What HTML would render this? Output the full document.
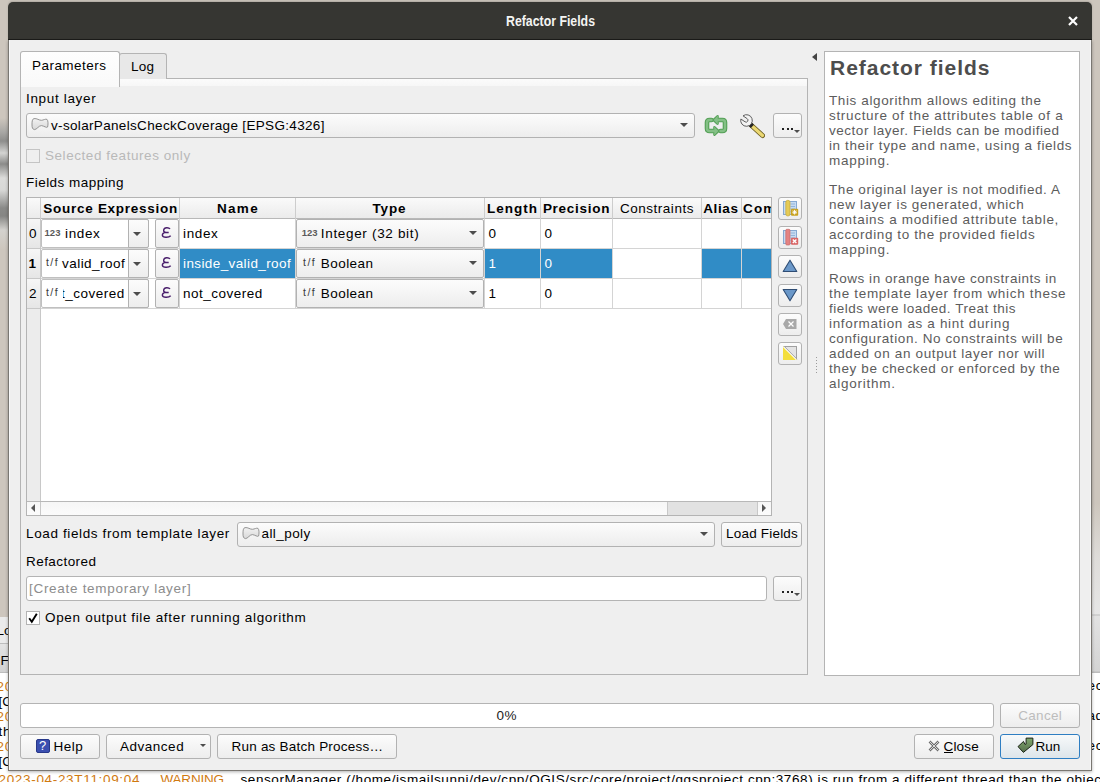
<!DOCTYPE html>
<html><head><meta charset="utf-8">
<style>
*{box-sizing:border-box;margin:0;padding:0}
html,body{width:1100px;height:782px;overflow:hidden;background:#cdc6bd}
body{position:relative;font-family:"Liberation Sans",sans-serif;font-size:14px;color:#000}
.a{position:absolute}
.t{position:absolute;white-space:nowrap}
.btn{position:absolute;border:1px solid #b2b2b2;border-radius:3px;background:linear-gradient(#fcfcfc,#ededed)}
.frame{position:absolute;border:1px solid #b4b4b4}
.arr{position:absolute;width:0;height:0;border-left:4px solid transparent;border-right:4px solid transparent;border-top:4px solid #4d4d4d}
</style></head>
<body>
<div class="a" style="left:0;top:0;width:9px;height:617px;background:linear-gradient(#cdc6bd 0,#cdc6bd 118px,#a9a8a5 132px,#8e8e8c 141px,#d4d4d2 153px,#8c8c8a 164px,#dcdcda 178px,#d8d8d6 190px,#8a8a88 208px,#868684 216px,#d4d2ce 230px,#cdc6bd 250px,#cdc6bd 616px)"></div>
<div class="a" style="left:0;top:617px;width:9px;height:26px;background:#ebebeb"></div>
<div class="a" style="left:0;top:643px;width:9px;height:1px;background:#bdbdbd"></div>
<div class="a" style="left:0;top:644px;width:9px;height:28px;background:linear-gradient(#e4e4e4,#d2d2d2)"></div>
<div class="a" style="left:0;top:672px;width:9px;height:1px;background:#bdbdbd"></div>
<div class="a" style="left:0;top:673px;width:1100px;height:109px;background:#fff"></div>
<div class="a" style="left:1091px;top:0;width:9px;height:673px;background:linear-gradient(#cdc6bd 0,#cdc6bd 503px,#dedcd9 557px,#e6e6e6 614px,#bdbdbd 615px,#e2e2e2 616px,#d4d4d4 671px,#bdbdbd 672px)"></div>
<div class="t" style="left:-3.50px;top:621px;font-size:13.5px;line-height:20px;letter-spacing:-0.031px;">Lo</div>
<div class="t" style="left:0.50px;top:651px;font-size:13.5px;line-height:20px;letter-spacing:-0.766px;">F</div>
<div class="t" style="left:-3.50px;top:677px;font-size:13.5px;line-height:20px;letter-spacing:0.750px;color:#d07a10;">2023</div>
<div class="t" style="left:-1.50px;top:692px;font-size:13.5px;line-height:20px;letter-spacing:-0.059px;">[CRIT</div>
<div class="t" style="left:-3.50px;top:707px;font-size:13.5px;line-height:20px;letter-spacing:0.750px;color:#d07a10;">2023</div>
<div class="t" style="left:-1.50px;top:722px;font-size:13.5px;line-height:20px;letter-spacing:0.849px;">the</div>
<div class="t" style="left:-3.50px;top:737px;font-size:13.5px;line-height:20px;letter-spacing:0.750px;color:#d07a10;">2023</div>
<div class="t" style="left:-1.50px;top:752px;font-size:13.5px;line-height:20px;letter-spacing:-0.059px;">[CRIT</div>
<div class="t" style="left:1087.50px;top:676px;font-size:13.5px;line-height:20px;letter-spacing:0.740px;">ect</div>
<div class="t" style="left:1087.50px;top:706px;font-size:13.5px;line-height:20px;letter-spacing:0.594px;">ad</div>
<div class="t" style="left:1087.50px;top:736px;font-size:13.5px;line-height:20px;letter-spacing:0.740px;">ect</div>
<div class="t" style="left:-1.50px;top:770px;font-size:13.5px;line-height:20px;letter-spacing:0.674px;color:#d07a10;">2023-04-23T11:09:04</div>
<div class="t" style="left:160.50px;top:770px;font-size:13.5px;line-height:20px;letter-spacing:-0.188px;color:#d07a10;">WARNING</div>
<div class="t" style="left:240.50px;top:770px;font-size:13.5px;line-height:20px;letter-spacing:0.581px;">sensorManager (/home/ismailsunni/dev/cpp/QGIS/src/core/project/qgsproject.cpp:3768) is run from a different thread than the object</div>
<div class="a" style="left:8px;top:2px;width:1084px;height:38px;background:#363632;border-radius:5px 5px 0 0;border-bottom:1px solid #1c1c1a;box-shadow:0 -1px 2px rgba(0,0,0,0.15)"></div>
<div class="a" style="left:8px;top:40px;width:1084px;height:731px;background:#efefef;box-shadow:0 1px 3px rgba(0,0,0,0.3);border:1px solid #7a7772;border-top:none"></div><div class="a" style="left:9px;top:40px;width:1px;height:730px;background:#f9f9f9"></div><div class="a" style="left:1090px;top:40px;width:1px;height:730px;background:#f7f7f7"></div>
<div class="t" style="left:506.00px;top:11px;font-size:14.5px;line-height:20px;letter-spacing:0.000px;font-weight:bold;transform:scaleX(0.8496);transform-origin:0 0;color:#f4f4f2;">Refactor Fields</div>
<svg class="a" style="left:1067px;top:15px" width="12" height="12" viewBox="0 0 12 12"><path d="M2 2L10 10M10 2L2 10" stroke="#fff" stroke-width="2.2"/></svg>
<div class="frame" style="left:20px;top:78px;width:788px;height:597px;background:#efefef"></div>
<div class="a" style="left:21px;top:79px;width:786px;height:7px;background:linear-gradient(#fbfbfb,#f7f7f7)"></div>
<div class="a" style="left:119px;top:53px;width:48px;height:26px;background:#e8e8e8;border:1px solid #b4b4b4;border-bottom:none;border-radius:3px 3px 0 0"></div>
<div class="a" style="left:20px;top:51px;width:100px;height:36px;background:linear-gradient(#fefefe,#f9f9f9);border:1px solid #b4b4b4;border-bottom:none;border-radius:3px 3px 0 0"></div>
<div class="t" style="left:32.00px;top:56px;font-size:13.5px;line-height:20px;letter-spacing:0.459px;">Parameters</div>
<div class="t" style="left:131.00px;top:57px;font-size:13.5px;line-height:20px;letter-spacing:0.224px;">Log</div>
<div class="t" style="left:26.00px;top:89px;font-size:13.5px;line-height:20px;letter-spacing:0.663px;">Input layer</div>
<div class="btn" style="left:26px;top:113px;width:669px;height:25px"></div>
<svg class="a" style="left:31px;top:117px" width="18" height="14" viewBox="0 0 18 14"><defs><linearGradient id="pg" x1="0" y1="0" x2="0" y2="1"><stop offset="0" stop-color="#f2f2f2"/><stop offset="1" stop-color="#d8d8d8"/></linearGradient></defs><path d="M3 1.6C6 1.2 8 3.4 10.5 3.3C12.5 3.2 14.5 1.6 16 2.4C17.3 3.4 17.2 8 16.6 10C15.8 11.2 13 9 10.5 8.6C8 8.3 5.5 12.8 3.5 12.6C1.5 12.4 1 10.5 1 8C1 5 1 2 3 1.6Z" fill="url(#pg)" stroke="#8a8a8a" stroke-width="0.9"/></svg>
<div class="t" style="left:51.00px;top:116px;font-size:13.5px;line-height:20px;letter-spacing:0.333px;">v-solarPanelsCheckCoverage [EPSG:4326]</div>
<div class="arr" style="left:680px;top:123px"></div>
<svg class="a" style="left:704px;top:115px" width="24" height="21" viewBox="0 0 24 21"><g fill="none" stroke-linejoin="round" stroke-linecap="round"><path d="M7.5 5H5.5Q3 5 3 7.5V13.5Q3 16 5.5 16H11" stroke="#55a057" stroke-width="4.6"/><path d="M16.5 16H18.5Q21 16 21 13.5V7.5Q21 5 18.5 5H13" stroke="#55a057" stroke-width="4.6"/><path d="M10.5 12.3L14.2 16L10.5 19.7Z" fill="#55a057" stroke="#55a057" stroke-width="2.6"/><path d="M13.5 1.3L9.8 5L13.5 8.7Z" fill="#55a057" stroke="#55a057" stroke-width="2.6"/><path d="M7.5 5H5.5Q3 5 3 7.5V13.5Q3 16 5.5 16H11" stroke="#84c086" stroke-width="2.4"/><path d="M16.5 16H18.5Q21 16 21 13.5V7.5Q21 5 18.5 5H13" stroke="#84c086" stroke-width="2.4"/><path d="M10.5 12.3L14.2 16L10.5 19.7Z" fill="#84c086" stroke="#84c086" stroke-width="0.6"/><path d="M13.5 1.3L9.8 5L13.5 8.7Z" fill="#84c086" stroke="#84c086" stroke-width="0.6"/></g></svg>
<svg class="a" style="left:739px;top:113px" width="26" height="26" viewBox="0 0 26 26"><path d="M12.5 12.5L23.5 22.5" stroke="#6b5d22" stroke-width="5" stroke-linecap="round"/><path d="M12.5 12.5L23.5 22.5" stroke="#ebd873" stroke-width="3.2" stroke-linecap="round"/><path d="M10.6 10.6L13.4 13.4" stroke="#262626" stroke-width="4.4"/><path d="M4.02 2.85A5.8 5.8 0 1 1 1.89 6.01L6.02 8.8A1.9 1.9 0 0 0 8.14 5.64Z" fill="#f3f3f3" stroke="#5e5e5e" stroke-width="1" stroke-linejoin="round"/></svg>
<div class="btn" style="left:773px;top:113px;width:29px;height:25px"></div>
<div class="a" style="left:782px;top:128px;width:2px;height:2px;background:#222"></div>
<div class="a" style="left:786.5px;top:128px;width:2px;height:2px;background:#222"></div>
<div class="a" style="left:791px;top:128px;width:2px;height:2px;background:#222"></div>
<div class="arr" style="left:794px;top:130px;border-left-width:3px;border-right-width:3px;border-top-width:3px"></div>
<div class="a" style="left:26px;top:149px;width:14px;height:14px;border:1px solid #c4c4c4;background:#efefef"></div>
<div class="t" style="left:45.00px;top:146px;font-size:13.5px;line-height:20px;letter-spacing:0.551px;color:#b9b9b9;">Selected features only</div>
<div class="t" style="left:26.00px;top:173px;font-size:13.5px;line-height:20px;letter-spacing:0.464px;">Fields mapping</div>
<div class="a" style="left:26px;top:197px;width:746px;height:319px;border:1px solid #b4b4b4;background:#fff;overflow:hidden">
 <div class="a" style="left:0;top:0;width:745px;height:21px;background:linear-gradient(#fafafa,#ebebeb);border-bottom:1px solid #b8b8b8"></div>
 <div class="a" style="left:13px;top:0;width:1px;height:21px;background:#cdcdcd"></div>
 <div class="a" style="left:152px;top:0;width:1px;height:21px;background:#cdcdcd"></div>
 <div class="a" style="left:268px;top:0;width:1px;height:21px;background:#cdcdcd"></div>
 <div class="a" style="left:457px;top:0;width:1px;height:21px;background:#cdcdcd"></div>
 <div class="a" style="left:513px;top:0;width:1px;height:21px;background:#cdcdcd"></div>
 <div class="a" style="left:585px;top:0;width:1px;height:21px;background:#cdcdcd"></div>
 <div class="a" style="left:674px;top:0;width:1px;height:21px;background:#cdcdcd"></div>
 <div class="a" style="left:714px;top:0;width:1px;height:21px;background:#cdcdcd"></div>
 <div class="a" style="left:0;top:21px;width:14px;height:282px;background:#ececec;border-right:1px solid #c8c8c8"></div>
 <div class="a" style="left:0;top:21px;width:14px;height:30px;background:linear-gradient(#f6f6f6,#e6e6e6);border-right:1px solid #c8c8c8;border-bottom:1px solid #c8c8c8"></div>
 <div class="a" style="left:0;top:51px;width:14px;height:30px;background:linear-gradient(#f6f6f6,#e6e6e6);border-right:1px solid #c8c8c8;border-bottom:1px solid #c8c8c8"></div>
 <div class="a" style="left:0;top:81px;width:14px;height:30px;background:linear-gradient(#f6f6f6,#e6e6e6);border-right:1px solid #c8c8c8;border-bottom:1px solid #c8c8c8"></div>
 <div class="a" style="left:14px;top:50px;width:731px;height:1px;background:#d4d4d4"></div>
 <div class="a" style="left:14px;top:80px;width:731px;height:1px;background:#d4d4d4"></div>
 <div class="a" style="left:14px;top:110px;width:731px;height:1px;background:#d4d4d4"></div>
 <div class="a" style="left:152px;top:21px;width:1px;height:90px;background:#d4d4d4"></div>
 <div class="a" style="left:268px;top:21px;width:1px;height:90px;background:#d4d4d4"></div>
 <div class="a" style="left:457px;top:21px;width:1px;height:90px;background:#d4d4d4"></div>
 <div class="a" style="left:513px;top:21px;width:1px;height:90px;background:#d4d4d4"></div>
 <div class="a" style="left:585px;top:21px;width:1px;height:90px;background:#d4d4d4"></div>
 <div class="a" style="left:674px;top:21px;width:1px;height:90px;background:#d4d4d4"></div>
 <div class="a" style="left:714px;top:21px;width:1px;height:90px;background:#d4d4d4"></div>
 <div class="a" style="left:153px;top:51px;width:115px;height:29px;background:#308cc6"></div>
 <div class="a" style="left:458px;top:51px;width:55px;height:29px;background:#308cc6"></div>
 <div class="a" style="left:514px;top:51px;width:71px;height:29px;background:#308cc6"></div>
 <div class="a" style="left:675px;top:51px;width:39px;height:29px;background:#308cc6"></div>
 <div class="a" style="left:715px;top:51px;width:30px;height:29px;background:#308cc6"></div>
</div>
<div class="t" style="left:43.20px;top:199px;font-size:13.5px;line-height:20px;letter-spacing:0.739px;font-weight:bold;">Source Expression</div>
<div class="t" style="left:217.00px;top:199px;font-size:13.5px;line-height:20px;letter-spacing:1.305px;font-weight:bold;">Name</div>
<div class="t" style="left:372.50px;top:199px;font-size:13.5px;line-height:20px;letter-spacing:0.848px;font-weight:bold;">Type</div>
<div class="t" style="left:487.00px;top:199px;font-size:13.5px;line-height:20px;letter-spacing:1.018px;font-weight:bold;">Length</div>
<div class="t" style="left:542.90px;top:199px;font-size:13.5px;line-height:20px;letter-spacing:0.720px;font-weight:bold;">Precision</div>
<div class="t" style="left:619.90px;top:199px;font-size:13.5px;line-height:20px;letter-spacing:0.530px;">Constraints</div>
<div class="t" style="left:703.20px;top:199px;font-size:13.5px;line-height:20px;letter-spacing:0.637px;font-weight:bold;">Alias</div>
<div class="a" style="left:742px;top:198px;width:29px;height:20px;overflow:hidden"><div class="t" style="left:1.10px;top:1px;font-size:13.5px;line-height:20px;letter-spacing:1.085px;font-weight:bold;">Comment</div>
</div>
<div class="t" style="left:29.00px;top:224px;font-size:13.5px;line-height:20px;letter-spacing:0.750px;">0</div>
<div class="t" style="left:28.50px;top:254px;font-size:13.5px;line-height:20px;letter-spacing:1.531px;font-weight:bold;">1</div>
<div class="t" style="left:29.00px;top:284px;font-size:13.5px;line-height:20px;letter-spacing:0.750px;">2</div>
<div class="a" style="left:41px;top:219px;width:108px;height:29px;background:#fff;border:1px solid #c0c0c0;border-radius:2px"></div>
<div class="btn" style="left:128px;top:219px;width:21px;height:29px;border-radius:0 2px 2px 0"></div>
<div class="arr" style="left:133px;top:232px"></div>
<div class="btn" style="left:155px;top:219px;width:24px;height:29px;border-radius:2px"></div>
<svg class="a" style="left:161px;top:226px" width="11" height="13" viewBox="0 0 11 13"><path d="M9 3C8 1.3 3.2 0.8 2.7 4C2.4 5.8 3.8 6.4 5 6.4H7.7M5 6.4C2.5 6.6 1.2 7.8 1.4 9.3C1.7 11.6 7.5 12 9.7 9.7" fill="none" stroke="#4a1f6c" stroke-width="1.45"/></svg>
<div class="t" style="left:44.50px;top:223px;font-size:9.5px;line-height:20px;letter-spacing:0.052px;font-weight:bold;color:#5a5a5a;">123</div>
<div class="t" style="left:65.00px;top:224px;font-size:13.5px;line-height:20px;letter-spacing:0.650px;">index</div>
<div class="t" style="left:183.00px;top:224px;font-size:13.5px;line-height:20px;letter-spacing:0.650px;">index</div>
<div class="btn" style="left:296px;top:219px;width:188px;height:29px;border-radius:2px"></div>
<div class="t" style="left:301.70px;top:223px;font-size:9.5px;line-height:20px;letter-spacing:0.052px;font-weight:bold;color:#5a5a5a;">123</div>
<div class="t" style="left:320.80px;top:224px;font-size:13.5px;line-height:20px;letter-spacing:0.674px;">Integer (32 bit)</div>
<div class="arr" style="left:469px;top:231px"></div>
<div class="t" style="left:488.50px;top:224px;font-size:13.5px;line-height:20px;letter-spacing:0.750px;">0</div>
<div class="t" style="left:544.50px;top:224px;font-size:13.5px;line-height:20px;letter-spacing:0.750px;">0</div>
<div class="a" style="left:41px;top:249px;width:108px;height:29px;background:#fff;border:1px solid #c0c0c0;border-radius:2px"></div>
<div class="btn" style="left:128px;top:249px;width:21px;height:29px;border-radius:0 2px 2px 0"></div>
<div class="arr" style="left:133px;top:262px"></div>
<div class="btn" style="left:155px;top:249px;width:24px;height:29px;border-radius:2px"></div>
<svg class="a" style="left:161px;top:256px" width="11" height="13" viewBox="0 0 11 13"><path d="M9 3C8 1.3 3.2 0.8 2.7 4C2.4 5.8 3.8 6.4 5 6.4H7.7M5 6.4C2.5 6.6 1.2 7.8 1.4 9.3C1.7 11.6 7.5 12 9.7 9.7" fill="none" stroke="#4a1f6c" stroke-width="1.45"/></svg>
<div class="t" style="left:46.00px;top:252px;font-size:10.5px;line-height:20px;letter-spacing:1.411px;color:#3a3a3a;">t/f</div>
<div class="t" style="left:62.00px;top:254px;font-size:13.5px;line-height:20px;letter-spacing:0.459px;">valid_roof</div>
<div class="t" style="left:183.00px;top:254px;font-size:13.5px;line-height:20px;letter-spacing:0.397px;color:#fff;">inside_valid_roof</div>
<div class="btn" style="left:296px;top:249px;width:188px;height:29px;border-radius:2px"></div>
<div class="t" style="left:303.10px;top:252px;font-size:10.5px;line-height:20px;letter-spacing:1.411px;color:#3a3a3a;">t/f</div>
<div class="t" style="left:320.80px;top:254px;font-size:13.5px;line-height:20px;letter-spacing:0.438px;">Boolean</div>
<div class="arr" style="left:469px;top:261px"></div>
<div class="t" style="left:488.50px;top:254px;font-size:13.5px;line-height:20px;letter-spacing:0.750px;color:#fff;">1</div>
<div class="t" style="left:544.50px;top:254px;font-size:13.5px;line-height:20px;letter-spacing:0.750px;color:#fff;">0</div>
<div class="a" style="left:41px;top:279px;width:108px;height:29px;background:#fff;border:1px solid #c0c0c0;border-radius:2px"></div>
<div class="btn" style="left:128px;top:279px;width:21px;height:29px;border-radius:0 2px 2px 0"></div>
<div class="arr" style="left:133px;top:292px"></div>
<div class="btn" style="left:155px;top:279px;width:24px;height:29px;border-radius:2px"></div>
<svg class="a" style="left:161px;top:286px" width="11" height="13" viewBox="0 0 11 13"><path d="M9 3C8 1.3 3.2 0.8 2.7 4C2.4 5.8 3.8 6.4 5 6.4H7.7M5 6.4C2.5 6.6 1.2 7.8 1.4 9.3C1.7 11.6 7.5 12 9.7 9.7" fill="none" stroke="#4a1f6c" stroke-width="1.45"/></svg>
<div class="t" style="left:46.00px;top:282px;font-size:10.5px;line-height:20px;letter-spacing:1.411px;color:#3a3a3a;">t/f</div>
<div class="a" style="left:63px;top:280px;width:64px;height:27px;overflow:hidden"><div class="t" style="left:-18.00px;top:4px;font-size:13.5px;line-height:20px;letter-spacing:0.501px;">not_covered</div>
</div>
<div class="t" style="left:183.00px;top:284px;font-size:13.5px;line-height:20px;letter-spacing:0.501px;">not_covered</div>
<div class="btn" style="left:296px;top:279px;width:188px;height:29px;border-radius:2px"></div>
<div class="t" style="left:303.10px;top:282px;font-size:10.5px;line-height:20px;letter-spacing:1.411px;color:#3a3a3a;">t/f</div>
<div class="t" style="left:320.80px;top:284px;font-size:13.5px;line-height:20px;letter-spacing:0.438px;">Boolean</div>
<div class="arr" style="left:469px;top:291px"></div>
<div class="t" style="left:488.50px;top:284px;font-size:13.5px;line-height:20px;letter-spacing:0.750px;">1</div>
<div class="t" style="left:544.50px;top:284px;font-size:13.5px;line-height:20px;letter-spacing:0.750px;">0</div>
<div class="a" style="left:27px;top:501px;width:744px;height:14px;background:linear-gradient(#f6f6f6,#fbfbfb);border-top:1px solid #b8b8b8"></div>
<div class="a" style="left:40px;top:502px;width:1px;height:13px;background:#c8c8c8"></div>
<div class="a" style="left:31px;top:504px;width:0;height:0;border-top:4px solid transparent;border-bottom:4px solid transparent;border-right:4px solid #555"></div>
<div class="a" style="left:667px;top:502px;width:91px;height:13px;background:#e2e2e2;border-left:1px solid #c8c8c8;border-right:1px solid #c8c8c8"></div>
<div class="a" style="left:762px;top:504px;width:0;height:0;border-top:4px solid transparent;border-bottom:4px solid transparent;border-left:4px solid #555"></div>
<div class="btn" style="left:778px;top:197px;width:24px;height:23px"></div>
<svg class="a" style="left:781px;top:199px" width="18" height="19" viewBox="0 0 18 19"><rect x="2.5" y="2.5" width="13" height="13" fill="#c6dbf2" stroke="#86a9d2"/><path d="M9.5 5H14M9.5 7.5H14M9.5 10H14M9.5 12.5H14" stroke="#86a9d2" stroke-width="0.8"/><rect x="4.8" y="1.3" width="4.2" height="15.7" rx="2" fill="#e5cb56" stroke="#c4a83a" stroke-width="0.7"/><rect x="10" y="9.7" width="7.2" height="7" rx="1" fill="#c9a21e"/><path d="M13.6 10.9V15.5M11.3 13.2H15.9M12 11.6L15.2 14.8M15.2 11.6L12 14.8" stroke="#fff" stroke-width="1"/></svg>
<div class="btn" style="left:778px;top:226px;width:24px;height:23px"></div>
<svg class="a" style="left:781px;top:228px" width="18" height="19" viewBox="0 0 18 19"><rect x="2.5" y="2.5" width="13" height="13" fill="#c6dbf2" stroke="#86a9d2"/><path d="M9.5 5H14M9.5 7.5H14M9.5 10H14M9.5 12.5H14" stroke="#86a9d2" stroke-width="0.8"/><rect x="4.8" y="1.3" width="4.2" height="15.7" rx="1" fill="#e38383" stroke="#c86a6a" stroke-width="0.7"/><rect x="10" y="9.7" width="7.2" height="7" rx="1" fill="#d96666"/><path d="M11.8 11.5L15.4 15M15.4 11.5L11.8 15" stroke="#fff" stroke-width="1.4"/></svg>
<div class="btn" style="left:778px;top:255px;width:24px;height:23px"></div>
<svg class="a" style="left:782px;top:259px" width="16" height="14" viewBox="0 0 16 14"><path d="M8 1.2L14.8 12.5H1.2Z" fill="#6b98c9" stroke="#2f4d74" stroke-width="1.1" stroke-linejoin="round"/></svg>
<div class="btn" style="left:778px;top:284px;width:24px;height:23px"></div>
<svg class="a" style="left:782px;top:288px" width="16" height="14" viewBox="0 0 16 14"><path d="M1.2 1.5H14.8L8 12.8Z" fill="#6b98c9" stroke="#2f4d74" stroke-width="1.1" stroke-linejoin="round"/></svg>
<div class="btn" style="left:778px;top:313px;width:24px;height:23px"></div>
<svg class="a" style="left:782px;top:318px" width="16" height="12" viewBox="0 0 16 12"><path d="M4 1H14.5V11H4L1 6Z" fill="#a9a9a9"/><path d="M6.5 3.5L11.5 8.5M11.5 3.5L6.5 8.5" stroke="#fff" stroke-width="1.2"/></svg>
<div class="btn" style="left:778px;top:342px;width:24px;height:23px"></div>
<svg class="a" style="left:782px;top:345px" width="16" height="16" viewBox="0 0 16 16"><rect x="1.5" y="1.5" width="13" height="13" fill="#e4e4e4" stroke="#a0a0a0"/><path d="M1 1L15 15H1Z" fill="#f3de3c"/><path d="M1.5 1.5L14.5 14.5" stroke="#fff" stroke-width="1.6"/><path d="M2 1.2L15 14.2" stroke="#777" stroke-width="0.7"/></svg>
<div class="t" style="left:26.00px;top:524px;font-size:13.5px;line-height:20px;letter-spacing:0.623px;">Load fields from template layer</div>
<div class="btn" style="left:237px;top:522px;width:478px;height:25px"></div>
<svg class="a" style="left:242px;top:526px" width="18" height="14" viewBox="0 0 18 14"><defs><linearGradient id="pg" x1="0" y1="0" x2="0" y2="1"><stop offset="0" stop-color="#f2f2f2"/><stop offset="1" stop-color="#d8d8d8"/></linearGradient></defs><path d="M3 1.6C6 1.2 8 3.4 10.5 3.3C12.5 3.2 14.5 1.6 16 2.4C17.3 3.4 17.2 8 16.6 10C15.8 11.2 13 9 10.5 8.6C8 8.3 5.5 12.8 3.5 12.6C1.5 12.4 1 10.5 1 8C1 5 1 2 3 1.6Z" fill="url(#pg)" stroke="#8a8a8a" stroke-width="0.9"/></svg>
<div class="t" style="left:261.50px;top:524px;font-size:13.5px;line-height:20px;letter-spacing:0.422px;">all_poly</div>
<div class="arr" style="left:700px;top:532px"></div>
<div class="btn" style="left:721px;top:522px;width:81px;height:25px"></div>
<div class="t" style="left:726.00px;top:524px;font-size:13.5px;line-height:20px;letter-spacing:0.203px;">Load Fields</div>
<div class="t" style="left:26.00px;top:552px;font-size:13.5px;line-height:20px;letter-spacing:0.442px;">Refactored</div>
<div class="a" style="left:26px;top:576px;width:741px;height:25px;background:#fff;border:1px solid #b4b4b4;border-radius:3px"></div>
<div class="t" style="left:29.00px;top:579px;font-size:13.5px;line-height:20px;letter-spacing:0.703px;color:#8d8d8d;">[Create temporary layer]</div>
<div class="btn" style="left:773px;top:576px;width:29px;height:25px"></div>
<div class="a" style="left:782px;top:591px;width:2px;height:2px;background:#222"></div>
<div class="a" style="left:786.5px;top:591px;width:2px;height:2px;background:#222"></div>
<div class="a" style="left:791px;top:591px;width:2px;height:2px;background:#222"></div>
<div class="arr" style="left:794px;top:593px;border-left-width:3px;border-right-width:3px;border-top-width:3px"></div>
<div class="a" style="left:26px;top:611px;width:14px;height:14px;border:1px solid #b4b4b4;background:#fff"></div>
<svg class="a" style="left:27px;top:612px" width="12" height="12" viewBox="0 0 12 12"><path d="M2.2 6.2L4.8 9.8L9.8 1.8" fill="none" stroke="#000" stroke-width="1.9"/></svg>
<div class="t" style="left:45.00px;top:608px;font-size:13.5px;line-height:20px;letter-spacing:0.683px;">Open output file after running algorithm</div>
<div class="a" style="left:812px;top:53px;width:0;height:0;border-top:4px solid transparent;border-bottom:4px solid transparent;border-right:5px solid #444"></div>
<div class="a" style="left:816px;top:357px;width:1px;height:17px;background:repeating-linear-gradient(#9a9a9a 0 1px,transparent 1px 3px)"></div>
<div class="a" style="left:824px;top:51px;width:256px;height:625px;background:#fff;border:1px solid #b4b4b4"></div>
<div class="t" style="left:830.00px;top:53px;font-size:21px;line-height:30px;letter-spacing:0.975px;font-weight:bold;color:#4d4d4d;">Refactor fields</div>
<div class="t" style="left:829.00px;top:91px;font-size:13.5px;line-height:20px;letter-spacing:0.620px;color:#5c5c5c;">This algorithm allows editing the</div>
<div class="t" style="left:829.00px;top:106px;font-size:13.5px;line-height:20px;letter-spacing:0.677px;color:#5c5c5c;">structure of the attributes table of a</div>
<div class="t" style="left:829.00px;top:121px;font-size:13.5px;line-height:20px;letter-spacing:0.526px;color:#5c5c5c;">vector layer. Fields can be modified</div>
<div class="t" style="left:829.00px;top:136px;font-size:13.5px;line-height:20px;letter-spacing:0.614px;color:#5c5c5c;">in their type and name, using a fields</div>
<div class="t" style="left:829.00px;top:151px;font-size:13.5px;line-height:20px;letter-spacing:0.721px;color:#5c5c5c;">mapping.</div>
<div class="t" style="left:829.00px;top:180px;font-size:13.5px;line-height:20px;letter-spacing:0.580px;color:#5c5c5c;">The original layer is not modified. A</div>
<div class="t" style="left:829.00px;top:195px;font-size:13.5px;line-height:20px;letter-spacing:0.603px;color:#5c5c5c;">new layer is generated, which</div>
<div class="t" style="left:829.00px;top:210px;font-size:13.5px;line-height:20px;letter-spacing:0.677px;color:#5c5c5c;">contains a modified attribute table,</div>
<div class="t" style="left:829.00px;top:225px;font-size:13.5px;line-height:20px;letter-spacing:0.607px;color:#5c5c5c;">according to the provided fields</div>
<div class="t" style="left:829.00px;top:240px;font-size:13.5px;line-height:20px;letter-spacing:0.721px;color:#5c5c5c;">mapping.</div>
<div class="t" style="left:829.00px;top:269px;font-size:13.5px;line-height:20px;letter-spacing:0.521px;color:#5c5c5c;">Rows in orange have constraints in</div>
<div class="t" style="left:829.00px;top:284px;font-size:13.5px;line-height:20px;letter-spacing:0.692px;color:#5c5c5c;">the template layer from which these</div>
<div class="t" style="left:829.00px;top:299px;font-size:13.5px;line-height:20px;letter-spacing:0.503px;color:#5c5c5c;">fields were loaded. Treat this</div>
<div class="t" style="left:829.00px;top:314px;font-size:13.5px;line-height:20px;letter-spacing:0.655px;color:#5c5c5c;">information as a hint during</div>
<div class="t" style="left:829.00px;top:329px;font-size:13.5px;line-height:20px;letter-spacing:0.593px;color:#5c5c5c;">configuration. No constraints will be</div>
<div class="t" style="left:829.00px;top:344px;font-size:13.5px;line-height:20px;letter-spacing:0.638px;color:#5c5c5c;">added on an output layer nor will</div>
<div class="t" style="left:829.00px;top:359px;font-size:13.5px;line-height:20px;letter-spacing:0.606px;color:#5c5c5c;">they be checked or enforced by the</div>
<div class="t" style="left:829.00px;top:374px;font-size:13.5px;line-height:20px;letter-spacing:0.753px;color:#5c5c5c;">algorithm.</div>
<div class="a" style="left:20px;top:703px;width:974px;height:25px;background:#fff;border:1px solid #b4b4b4;border-radius:3px"></div>
<div class="t" style="left:496.50px;top:706px;font-size:13.5px;line-height:20px;letter-spacing:0.555px;color:#222;">0%</div>
<div class="btn" style="left:1000px;top:703px;width:80px;height:25px"></div>
<div class="t" style="left:1018.20px;top:706px;font-size:13.5px;line-height:20px;letter-spacing:0.331px;color:#bdbdbd;">Cancel</div>
<div class="btn" style="left:20px;top:734px;width:80px;height:25px"></div>
<div class="a" style="left:36px;top:739px;width:14px;height:14px;background:#3b4fb0;border:1px solid #27388a;border-radius:2px"></div>
<div class="t" style="left:39px;top:739px;color:#fff;font-size:13px;line-height:14px">?</div>
<div class="t" style="left:53.50px;top:737px;font-size:13.5px;line-height:20px;letter-spacing:0.465px;">Help</div>
<div class="btn" style="left:106px;top:734px;width:105px;height:25px"></div>
<div class="t" style="left:120.00px;top:737px;font-size:13.5px;line-height:20px;letter-spacing:0.514px;">Advanced</div>
<div class="arr" style="left:200px;top:744px;border-left-width:3px;border-right-width:3px;border-top-width:3px"></div>
<div class="btn" style="left:217px;top:734px;width:180px;height:25px"></div>
<div class="t" style="left:231.50px;top:737px;font-size:13.5px;line-height:20px;letter-spacing:0.218px;">Run as Batch Process…</div>
<div class="btn" style="left:914px;top:734px;width:80px;height:25px"></div>
<svg class="a" style="left:928px;top:740px" width="12" height="12" viewBox="0 0 12 12"><path d="M1.5 1.5L10.5 10.5M10.5 1.5L1.5 10.5" stroke="#6e6e6e" stroke-width="2.6"/><path d="M1.5 1.5L10.5 10.5M10.5 1.5L1.5 10.5" stroke="#d8d8d8" stroke-width="1"/></svg>
<div class="t" style="left:943.50px;top:737px;font-size:13.5px;line-height:20px;letter-spacing:0.175px;">Close</div>
<div class="a" style="left:944px;top:752px;width:9px;height:1px;background:#000"></div>
<div class="a" style="left:1000px;top:734px;width:80px;height:25px;border:1px solid #2e7ec2;border-radius:3px;background:linear-gradient(#f7f9fa,#dde5ea)"></div>
<svg class="a" style="left:1016px;top:736px" width="19" height="19" viewBox="0 0 19 19"><defs><linearGradient id="rg" x1="0" y1="0" x2="0" y2="1"><stop offset="0" stop-color="#7fa86e"/><stop offset="1" stop-color="#566e4c"/></linearGradient></defs><path d="M10.1 2.1V8.1L8.9 8.4L7.5 5.4L2 10.6L7.4 16.4L16.9 8.6V2.1Z" fill="url(#rg)" stroke="#1c2418" stroke-width="1" stroke-linejoin="round"/></svg>
<div class="t" style="left:1035.50px;top:737px;font-size:13.5px;line-height:20px;letter-spacing:0.047px;">Run</div>
</body></html>
